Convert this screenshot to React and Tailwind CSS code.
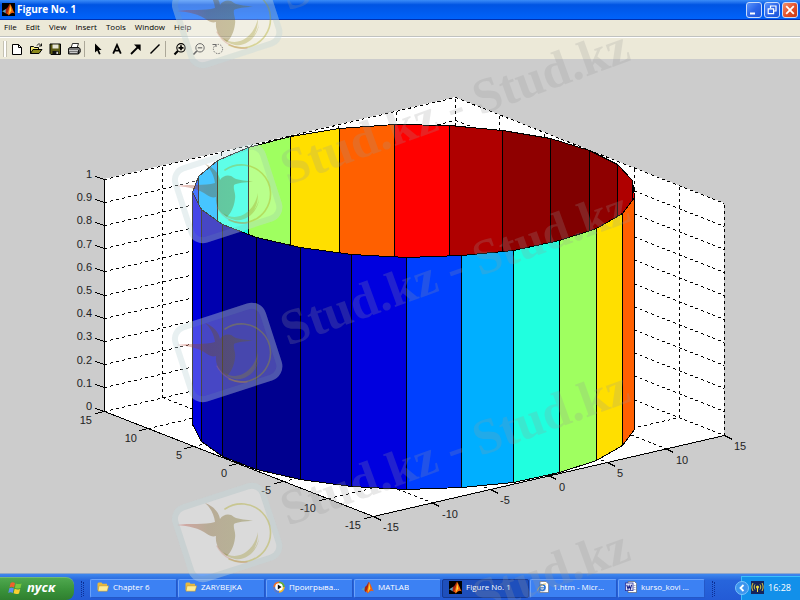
import React from "react";

const SIDES = 25;
const FACE_COLORS = [
  "#800000", "#8f0000", "#af0000", "#ff0000", "#ff6000",
  "#ffdf00", "#9fff60", "#20ffdf", "#00afff", "#0040ff",
  "#0000df", "#0000af", "#00008f", "#00008f", "#0000af",
  "#0000df", "#0040ff", "#00afff", "#20ffdf", "#9fff60",
  "#ffdf00", "#ff6000", "#ff0000", "#af0000", "#8f0000",
];
const HEIGHT = 232;

// Centre a coordinate on its pixel so that one-pixel strokes stay crisp.
const snap = (v) => Math.floor(v) + 0.5;

const rim = Array.from({ length: SIDES + 1 }, (_, k) => {
  const t = (2 * Math.PI * k) / SIDES;
  return [
    snap(414 + 175.5 * Math.cos(t) - 135 * Math.sin(t)),
    snap(191 - 40.5 * Math.cos(t) - 52.5 * Math.sin(t)),
  ];
});

const isFront = (k) => k >= 10 && k <= 21;
const drawOrder = [
  ...FACE_COLORS.map((_, k) => k).filter((k) => !isFront(k)),
  ...FACE_COLORS.map((_, k) => k).filter(isFront),
];

const left = [104, 411];
const front = [373, 516];
const right = [724, 435];
const back = [455, 329];
const mix = (a, b, f) => [a[0] + (b[0] - a[0]) * f, a[1] + (b[1] - a[1]) * f];
const lift = (p, f) => [p[0], p[1] - HEIGHT * f];

function Seg({ a, b, dashed }) {
  return (
    <line
      x1={snap(a[0])}
      y1={snap(a[1])}
      x2={snap(b[0])}
      y2={snap(b[1])}
      stroke="#000"
      strokeDasharray={dashed ? "3 3" : undefined}
    />
  );
}

function Plot() {
  const sixths = [0, 1, 2, 3, 4, 5, 6];
  const tenths = [0, 1, 2, 3, 4, 5, 6, 7, 8, 9, 10];
  const pts = (list) => list.map((p) => p.join(",")).join(" ");
  return (
    <svg viewBox="0 59 800 514" className="block h-auto w-full" role="img" aria-label="3-D surface of a cylinder">
      <g shapeRendering="crispEdges">
        <polygon
          fill="#fff"
          points={pts([left, front, right, lift(right, 1), lift(back, 1), lift(left, 1)])}
        />
        {sixths.map((i) => (
          <g key={i}>
            <Seg dashed a={mix(left, back, i / 6)} b={lift(mix(left, back, i / 6), 1)} />
            <Seg dashed a={mix(back, right, i / 6)} b={lift(mix(back, right, i / 6), 1)} />
            <Seg dashed a={mix(left, back, i / 6)} b={mix(front, right, i / 6)} />
            <Seg dashed a={mix(left, front, i / 6)} b={mix(back, right, i / 6)} />
          </g>
        ))}
        {tenths.map((i) => (
          <g key={i}>
            <Seg dashed a={lift(left, i / 10)} b={lift(back, i / 10)} />
            <Seg dashed a={lift(back, i / 10)} b={lift(right, i / 10)} />
            <Seg a={lift(left, i / 10)} b={[95, 408 - (HEIGHT * i) / 10]} />
          </g>
        ))}
        <Seg a={left} b={lift(left, 1)} />
        <Seg a={left} b={front} />
        <Seg a={front} b={right} />
        {sixths.map((i) => {
          const l = mix(left, front, i / 6);
          const r = mix(front, right, i / 6);
          return (
            <g key={i}>
              <Seg a={l} b={[l[0] - 9, l[1] + 2]} />
              <Seg a={r} b={[r[0] + 8, r[1] + 4]} />
            </g>
          );
        })}
        {drawOrder.map((k) => {
          const a = rim[k];
          const b = rim[k + 1];
          return (
            <polygon
              key={k}
              fill={FACE_COLORS[k]}
              stroke="#000"
              strokeWidth="1"
              points={pts([a, b, [b[0], b[1] + HEIGHT], [a[0], a[1] + HEIGHT]])}
            />
          );
        })}
      </g>
      <g className="fill-[#222] font-['Liberation_Sans',Arial,sans-serif] text-[11px]">
        {tenths.map((i) => (
          <text key={i} x="92" y={410 - Math.round((HEIGHT * i) / 10)} textAnchor="end">
            {i / 10}
          </text>
        ))}
        {sixths.map((i) => {
          const l = mix(left, front, i / 6);
          const r = mix(front, right, i / 6);
          return (
            <g key={i}>
              <text x={Math.round(l[0]) - 12} y={Math.round(l[1]) + 13} textAnchor="end">
                {15 - 5 * i}
              </text>
              <text x={Math.round(r[0]) + 10} y={Math.round(r[1]) + 15}>
                {5 * i - 15}
              </text>
            </g>
          );
        })}
      </g>
    </svg>
  );
}

function WatermarkLogo({ x, y }) {
  return (
    <g transform={`translate(${x} ${y})`}>
      <g transform="rotate(-18)">
        <rect x="-49" y="-40" width="98" height="81" rx="15" fill="#fff" fillOpacity="0.28" />
        <rect x="-46" y="-37" width="92" height="75" rx="12" fill="none" stroke="#6fa0a8" strokeOpacity="0.16" strokeWidth="6" />
      </g>
      <g fill="none" strokeLinecap="round">
        <path d="M-2 -23 A29 29 0 1 1 2 27" stroke="#a8a410" strokeOpacity="0.36" strokeWidth="1.6" />
        <path d="M-10 14 A30 30 0 0 0 20 30" stroke="#c87860" strokeOpacity="0.3" strokeWidth="1.4" />
      </g>
      <path d="M-4 20 C10 30 27 20 31 0 C31 12 27 19 21 23 C28 18 31 11 32 6 C31 18 20 29 8 27 C3 26 -1 24 -4 20Z" fill="#989018" fillOpacity="0.3" />
      <path
        d="M-22 -29 C-14 -26 -8 -20 -7 -13 C-4 -18 3 -19 7 -15 C12 -12 20 -13 26 -11 C18 -11 10 -10 7 -8 C6 -3 9 0 8 6 C7 14 4 20 0 24 C-7 20 -12 13 -11 4 C-14 5 -17 4 -20 2 C-28 -4 -38 -6 -50 -7 C-38 -9 -22 -7 -12 -10 C-13 -18 -17 -25 -22 -29Z"
        fill="url(#bird)"
        fillOpacity="0.32"
      />
    </g>
  );
}

const WATERMARK_LINES = [
  { x: 288, y: 11, text: "Stud.kz" },
  { x: 288, y: 185, text: "Stud.kz - Stud.kz" },
  { x: 288, y: 346, text: "Stud.kz - Stud.kz" },
  { x: 288, y: 526, text: "Stud.kz - Stud.kz" },
  { x: 480, y: 615, text: "Stud.kz" },
];

function Watermark() {
  return (
    <svg
      viewBox="0 0 800 600"
      preserveAspectRatio="xMinYMin meet"
      aria-hidden="true"
      className="pointer-events-none absolute inset-0 h-full w-full"
    >
      <defs>
        <linearGradient id="bird" x1="0" x2="1">
          <stop offset="0" stopColor="#d03838" />
          <stop offset="0.4" stopColor="#704808" />
          <stop offset="1" stopColor="#6c6808" />
        </linearGradient>
      </defs>
      {[18, 193, 352, 532].map((y) => (
        <WatermarkLogo key={y} x={227} y={y} />
      ))}
      <g className="fill-[#999] font-['Liberation_Serif',serif] text-[50px] font-bold" opacity="0.22">
        {WATERMARK_LINES.map(({ x, y, text }) => (
          <text key={y} transform={`translate(${x} ${y}) rotate(-20)`}>
            {text}
          </text>
        ))}
      </g>
    </svg>
  );
}

function MatlabIcon({ dark }) {
  return (
    <svg viewBox="0 0 12 12" className="h-[13px] w-[13px] shrink-0" aria-hidden="true">
      {dark && <rect width="12" height="12" fill="#000" />}
      <path d="M0.2 7.6 L3.6 5.6 L5.6 7 L3.8 9.6Z" fill="#5aa0c0" />
      <path d="M3.6 5.6 C5.5 4.5 6.2 1.5 7.4 0.6 L6.5 8 L4.5 10.4 L3.2 8.8Z" fill="#a82410" />
      <path d="M7.4 0.6 C9 2.5 10 7 11.9 9.8 C9.8 8.2 8.4 9.2 6.3 11.6 L4.6 9.6 C6 8 6.7 4 7.4 0.6Z" fill="#f0600c" />
      <path d="M7.5 1.8 L8.6 7 L6.4 10.6 Z" fill="#ffd838" />
    </svg>
  );
}

function FolderIcon() {
  return (
    <svg viewBox="0 0 12 12" className="h-3 w-3 shrink-0" aria-hidden="true">
      <path d="M0.5 2.5 L1.5 1.5 H4.5 L5.5 2.8 H10 V9.8 H1.2 L0.5 9Z" fill="#e8b83c" />
      <path d="M2 4.8 H11.7 L10.2 10.2 H1Z" fill="#ffec94" stroke="#b78a20" strokeWidth="0.5" />
    </svg>
  );
}

function MediaIcon() {
  return (
    <svg viewBox="0 0 12 12" className="h-3 w-3 shrink-0" aria-hidden="true">
      <circle cx="6" cy="6" r="5.6" fill="#e8702a" />
      <path d="M6 6 V0.4 A5.6 5.6 0 0 1 11.6 6Z" fill="#58b040" />
      <path d="M6 6 H11.6 A5.6 5.6 0 0 1 6 11.6Z" fill="#f0c030" />
      <path d="M6 6 V11.6 A5.6 5.6 0 0 1 0.4 6Z" fill="#4a78d8" />
      <circle cx="6" cy="6" r="3.8" fill="#fff" />
      <path d="M4.8 3.6 L8.6 6 L4.8 8.4Z" fill="#111" />
    </svg>
  );
}

function ExplorerIcon() {
  return (
    <svg viewBox="0 0 12 12" className="h-3 w-3 shrink-0" aria-hidden="true">
      <path d="M3 0.5 H9 L11.5 3 V11.5 H3Z" fill="#fff" stroke="#666" strokeWidth="0.6" />
      <circle cx="5.2" cy="6.6" r="2.9" fill="none" stroke="#2472d8" strokeWidth="1.5" />
      <path d="M2.6 6.8 H8" stroke="#2472d8" strokeWidth="1.1" />
      <path d="M0.5 9.5 C2 5 6 2.5 9 3" stroke="#e5b030" fill="none" strokeWidth="0.8" />
    </svg>
  );
}

function WordIcon() {
  return (
    <svg viewBox="0 0 12 12" className="h-3 w-3 shrink-0" aria-hidden="true">
      <path d="M3 0.5 H9.5 L11.5 2.5 V11.5 H3Z" fill="#fff" stroke="#555" strokeWidth="0.6" />
      <path d="M8.5 4.5 H10.5 M8.5 6.5 H10.5 M8.5 8.5 H10.5" stroke="#8890b0" strokeWidth="0.7" />
      <rect x="0.4" y="2" width="7.6" height="7.6" fill="#e6e8fa" stroke="#28309c" strokeWidth="0.8" />
      <path d="M1.8 3.8 L3 8 L4.2 4.8 L5.4 8 L6.6 3.8" fill="none" stroke="#1c248c" strokeWidth="1.1" />
    </svg>
  );
}

function ToolButton({ label, children }) {
  return (
    <button type="button" aria-label={label} className="flex h-5 w-[19px] items-center justify-center">
      <svg viewBox="0 0 14 14" className="h-[14px] w-[14px]" fill="none" stroke="#000" aria-hidden="true">
        {children}
      </svg>
    </button>
  );
}

function Separator() {
  return <div className="mx-px h-4 w-px bg-[#aca899]" />;
}

function Toolbar() {
  return (
    <div role="toolbar" className="flex h-[22px] items-center border-t border-white pl-[3px]">
      <div className="h-4 w-1 border-x border-[#c5c2b2] bg-white" />
      <ToolButton label="New">
        <path d="M2.5 2.5 H8.5 L11.5 5.5 V12.5 H2.5Z" fill="#fff" />
        <path d="M8.5 2.5 V5.5 H11.5" />
      </ToolButton>
      <ToolButton label="Open">
        <path d="M1.5 11.5 V4.5 H4.5 L5.5 5.5 H9.5 V7.5" fill="#f6ec7a" />
        <path d="M1.5 11.5 L4 7.5 H13 L10 11.5Z" fill="#8c8a1c" />
        <path d="M8 3.5 C9 1.5 11 1.5 12 3.5 M12.5 1.5 V4 H10" strokeWidth="0.9" />
      </ToolButton>
      <ToolButton label="Save">
        <path d="M2 2 H12.5 V12.5 H3 L2 11.5Z" fill="#5b5a14" />
        <path d="M4.5 2.5 H10.5 V6.5 H4.5Z" fill="#e6e4d4" stroke="none" />
        <path d="M4.5 9 H10.5 V12.5 H4.5Z" fill="#111" stroke="none" />
        <path d="M8.5 9.8 H9.8 V12 H8.5Z" fill="#fff" stroke="none" />
      </ToolButton>
      <ToolButton label="Print">
        <path d="M4 6 L5.5 1.5 H11.5 L10 6" fill="#fff" strokeWidth="0.8" />
        <path d="M1.5 6.5 L3 5.5 H12 L13.2 7 V10 L11.5 12 H1.5Z" fill="#777" strokeWidth="0.9" />
        <path d="M2 8.5 H11.5 M3 10.5 H10" stroke="#ddd" strokeWidth="0.8" />
        <path d="M11.5 8 V12" strokeWidth="0.8" />
      </ToolButton>
      <Separator />
      <div className="w-0.5" />
      <ToolButton label="Edit Plot">
        <path d="M4 1.5 V10.5 L6.2 8.6 L8 12.6 L9.6 12 L7.9 8.1 H10.6Z" fill="#000" stroke="none" />
      </ToolButton>
      <ToolButton label="Insert Text">
        <path d="M3.2 11.6 L7 3 L10.8 11.6 M4.8 8.6 H9.2" strokeWidth="1.8" />
      </ToolButton>
      <ToolButton label="Insert Arrow">
        <path d="M2 12 L9.5 4.5" strokeWidth="1.8" />
        <path d="M5 2.5 H11.6 V9Z" fill="#000" stroke="none" />
      </ToolButton>
      <ToolButton label="Insert Line">
        <path d="M2.5 11.5 L11.5 2.5" strokeWidth="1.5" />
      </ToolButton>
      <Separator />
      <div className="w-[3px]" />
      <ToolButton label="Zoom In">
        <circle cx="8" cy="5.8" r="4.2" strokeWidth="1.1" />
        <path d="M5.5 5.8 H10.5 M8 3.3 V8.3" strokeWidth="1.7" />
        <path d="M4.8 9 L1.5 12.5" strokeWidth="2" />
      </ToolButton>
      <ToolButton label="Zoom Out">
        <circle cx="8" cy="5.8" r="4.2" strokeWidth="1" stroke="#333" />
        <path d="M5.8 5.8 H10.2" strokeWidth="1.2" stroke="#333" />
        <path d="M4.8 9 L1.5 12.5" strokeWidth="1.6" stroke="#333" />
      </ToolButton>
      <ToolButton label="Rotate 3D">
        <circle cx="7" cy="7" r="4.6" strokeDasharray="1.4 1.2" stroke="#333" />
        <path d="M1.5 2.5 H5 V5" stroke="#333" />
      </ToolButton>
    </div>
  );
}

function WindowButton({ label, close, children }) {
  return (
    <button
      type="button"
      aria-label={label}
      className={
        "flex h-4 w-4 items-center justify-center rounded-[3px] border border-[#c9dcfb] bg-linear-to-br " +
        (close ? "from-[#f0906c] via-[#e4522c] to-[#c83a10]" : "from-[#5c94fa] via-[#2c66ea] to-[#1c54d8]")
      }
    >
      <svg viewBox="0 0 14 14" className="h-[14px] w-[14px]" fill="none" stroke="#fff" aria-hidden="true">
        {children}
      </svg>
    </button>
  );
}

function Grip() {
  return (
    <div className="flex h-4 w-4 shrink-0 items-center justify-center gap-px" aria-hidden="true">
      <div className="h-4 border-l border-dotted border-[#0c2f96]" />
      <div className="h-[14px] border-l border-dotted border-[#0c2f96]" />
    </div>
  );
}

function Task({ icon, label, active }) {
  return (
    <button
      type="button"
      className={
        "flex h-[19px] min-w-0 flex-1 items-center gap-1 rounded-[2px] border pb-[3px] pl-[6px] text-[8px] text-white " +
        (active
          ? "border-[#153a94] bg-[#1e4fbc]"
          : "border-t-[#6ba2fa] border-r-[#2458c8] border-b-[#2458c8] border-l-[#6ba2fa] bg-[#3c81f3]")
      }
    >
      {icon}
      <span className="truncate">{label}</span>
    </button>
  );
}

export default function App() {
  return (
    <div className="relative flex min-h-screen flex-col overflow-hidden bg-[#ccc] font-['Open_Sans','Noto_Sans',sans-serif]">
      <header className="flex h-5 items-center border-b border-[#0030b0] bg-linear-to-b from-[#3a8cf8] via-[#0054e3] via-25% to-[#0063fb] pr-0.5 pl-0.5">
        <MatlabIcon dark />
        <h1 className="ml-0.5 flex-1 text-[10px] font-bold text-white">Figure No. 1</h1>
        <div className="flex gap-0.5">
          <WindowButton label="Minimize">
            <path d="M3 10.5 H8" strokeWidth="2" />
          </WindowButton>
          <WindowButton label="Restore">
            <path d="M5.5 5 V3 H11 V8 H9" strokeWidth="1.2" />
            <path d="M3.2 5.8 H8.6 V10.6 H3.2Z" strokeWidth="1.2" />
          </WindowButton>
          <WindowButton label="Close" close>
            <path d="M3.2 3.2 L10.8 10.8 M10.8 3.2 L3.2 10.8" strokeWidth="1.8" />
          </WindowButton>
        </div>
      </header>

      <div className="bg-[#ece9d8]">
        <nav className="flex h-[17px] items-center gap-[9px] border-b border-[#c0c2c0] pb-0.5 pl-1 text-[8px] text-black">
          {["File", "Edit", "View", "Insert", "Tools", "Window", "Help"].map((name) => (
            <button key={name} type="button">
              {name}
            </button>
          ))}
        </nav>
        <Toolbar />
      </div>

      <main className="flex-1">
        <Plot />
      </main>

      <footer className="flex h-[27px] items-end border-t border-[#8fa6cc] bg-linear-to-b from-[#3f88ee] via-[#2765dc] via-25% to-[#235bd6] text-white">
        <button
          type="button"
          className="flex h-[23px] w-[74px] shrink-0 items-center gap-1 rounded-r-lg border-t border-[#72b872] bg-linear-to-b from-[#4fa84f] via-[#3b943b] to-[#2f7f2f] pb-0.5 pl-2 text-[13px] font-bold italic"
        >
          <svg viewBox="0 0 15 14" className="h-[14px] w-[15px]" aria-hidden="true">
            <path d="M2.6 2 C4 1 5.5 1 7 2 L6 6.5 C4.5 5.6 3 5.6 1.5 6.4Z" fill="#f0602c" />
            <path d="M7.8 2.4 C9.5 3.4 11.5 3.3 13.6 2.4 L12.5 7 C10.5 7.8 8.8 7.8 6.9 6.9Z" fill="#7cc83c" />
            <path d="M1.3 7.3 C2.8 6.5 4.3 6.5 5.8 7.3 L4.8 12 C3.3 11.1 1.8 11.1 0.3 12Z" fill="#5a90f0" />
            <path d="M6.6 7.7 C8.5 8.7 10.2 8.7 12.2 7.9 L11 12.4 C9.2 13.3 7.4 13.2 5.6 12.3Z" fill="#f8d030" />
          </svg>
          пуск
        </button>
        <div className="flex h-[23px] min-w-0 flex-1 items-center">
          <Grip />
          <div className="flex min-w-0 flex-1 gap-px">
            <Task icon={<FolderIcon />} label="Chapter 6" />
            <Task icon={<FolderIcon />} label="ZARYBEJKA" />
            <Task icon={<MediaIcon />} label="Проигрыва..." />
            <Task icon={<MatlabIcon />} label="MATLAB" />
            <Task icon={<MatlabIcon dark />} label="Figure No. 1" active />
            <Task icon={<ExplorerIcon />} label="1.htm - Micr..." />
            <Task icon={<WordIcon />} label="kurso_kovi ..." />
          </div>
          <Grip />
        </div>
        <div className="ml-5 flex h-6 w-[59px] shrink-0 items-center border-t border-l border-[#3cc0fa] bg-[#1290ea] pb-0.5">
          <button
            type="button"
            aria-label="Show hidden icons"
            className="-ml-[7px] flex h-[14px] w-[14px] shrink-0 items-center justify-center rounded-full border border-[#7cc4fa] bg-[#3c94ee]"
          >
            <svg viewBox="0 0 10 10" className="h-[10px] w-[10px]" fill="none" stroke="#fff" strokeWidth="1.8" aria-hidden="true">
              <path d="M6.5 2 L3.5 5 L6.5 8" />
            </svg>
          </button>
          <svg viewBox="0 0 13 13" className="ml-0.5 h-[13px] w-[13px] shrink-0" fill="none" stroke="#f4e040" aria-hidden="true">
            <rect width="13" height="13" fill="#14245c" stroke="none" />
            <circle cx="6.5" cy="6" r="1.5" fill="#f4e040" stroke="none" />
            <path d="M6.5 7 V11" />
            <path d="M4 3.5 C3 5 3 7 4 8.5 M9 3.5 C10 5 10 7 9 8.5 M2 2 C0.5 4.5 0.5 7.5 2 10 M11 2 C12.5 4.5 12.5 7.5 11 10" strokeWidth="0.9" />
          </svg>
          <span className="ml-1 text-[9px]">16:28</span>
        </div>
      </footer>
      <Watermark />
    </div>
  );
}
